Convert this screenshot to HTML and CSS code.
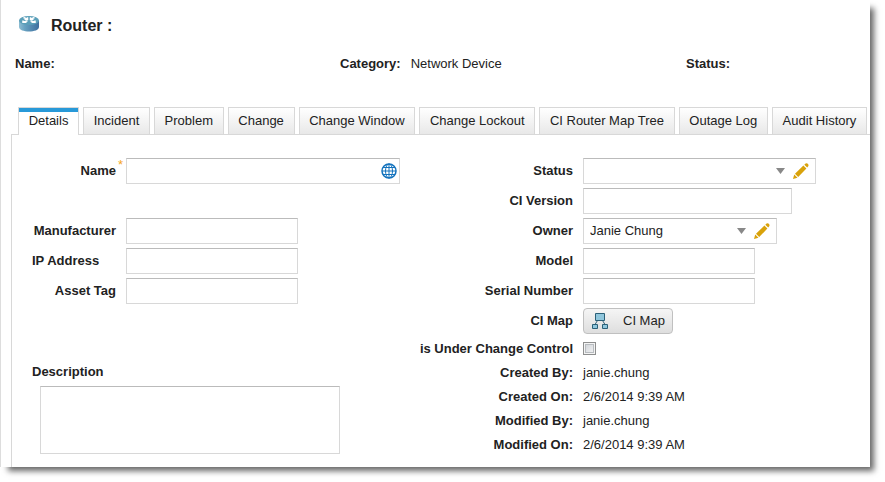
FILE: index.html
```html
<!DOCTYPE html>
<html lang="en">
<head>
    <meta charset="UTF-8">
    <meta name="viewport" content="width=device-width, initial-scale=1.0">
    <title>Router</title>
    <link rel="stylesheet" href="styles.css">
</head>
<body>
<svg class="sprite" aria-hidden="true">
    <symbol id="pencil" viewBox="0 0 16 16">
        <path fill="#d9a20b" d="M0 16l1.200-4.500 3.300 3.300zM2 10.800L10.400 2.600l3 3-8.200 8.400zM11.300 1.700L12.600.5q1.200-.6 2.200.3t.6 2.200l-1.200 1.600z"/>
    </symbol>
</svg>

<div class="window">
    <header class="title">
        <svg class="router-icon" viewBox="0 0 20 16" aria-hidden="true">
            <defs>
                <linearGradient id="side">
                    <stop offset="0" stop-color="#8dbdd2"/>
                    <stop offset=".3" stop-color="#66a0c0"/>
                    <stop offset="1" stop-color="#3e6f9f"/>
                </linearGradient>
            </defs>
            <path fill="url(#side)" d="M0 4.500V11c0 6 20 6 20 0V4.500z"/>
            <ellipse cx="10" cy="4.500" rx="10" ry="4.500" fill="#5b9fb9"/>
            <path fill="none" stroke="#fff" stroke-width="1.500" d="M4.500 1.500l4 1.700v-2M8.700 3.200H5.500M15.500 1.500l-4 1.700v-2M11.300 3.200h3.200M8.500 4.800L4 6.300M4 4.500v1.800h3.500M11.500 4.800L16 6.300M16 4.500v1.800h-3.500"/>
        </svg>
        <h1>Router :</h1>
    </header>

    <div class="summary">
        <div><b>Name:</b></div>
        <div><b>Category:</b><span>Network Device</span></div>
        <div><b>Status:</b></div>
    </div>

    <nav class="tabs">
        <button type="button" class="tab active">Details</button>
        <button type="button" class="tab">Incident</button>
        <button type="button" class="tab">Problem</button>
        <button type="button" class="tab">Change</button>
        <button type="button" class="tab">Change Window</button>
        <button type="button" class="tab">Change Lockout</button>
        <button type="button" class="tab">CI Router Map Tree</button>
        <button type="button" class="tab">Outage Log</button>
        <button type="button" class="tab">Audit History</button>
    </nav>

    <form class="panel">
        <div class="left">
            <div class="row name-row">
                <label for="name">Name</label>
                <span class="required">*</span>
                <div class="field wide">
                    <input type="text" id="name">
                    <svg class="icon" viewBox="0 0 16 16" aria-hidden="true">
                        <g fill="none" stroke="#1272bd">
                            <circle cx="8" cy="8" r="7" stroke-width="1.500"/>
                            <ellipse cx="8" cy="8" rx="3.500" ry="7"/>
                            <path d="M8 1v14M1 8h14M2 4.500h12M2 11.500h12"/>
                        </g>
                    </svg>
                </div>
            </div>
            <div class="row">
                <label for="manufacturer">Manufacturer</label>
                <input type="text" class="field" id="manufacturer">
            </div>
            <div class="row">
                <label for="ip" class="start">IP Address</label>
                <input type="text" class="field" id="ip">
            </div>
            <div class="row">
                <label for="asset">Asset Tag</label>
                <input type="text" class="field" id="asset">
            </div>
            <div class="description">
                <label for="description">Description</label>
                <textarea id="description"></textarea>
            </div>
        </div>

        <div class="right">
            <div class="row">
                <label for="status">Status</label>
                <div class="field status">
                    <select id="status"><option></option></select>
                    <svg class="arrow" viewBox="0 0 9 6" aria-hidden="true"><path d="M0 0h9L4.500 6z"/></svg>
                    <svg class="icon" aria-hidden="true"><use href="#pencil"/></svg>
                </div>
            </div>
            <div class="row">
                <label for="version">CI Version</label>
                <input type="text" class="field version" id="version">
            </div>
            <div class="row">
                <label for="owner">Owner</label>
                <div class="field owner">
                    <select id="owner"><option>Janie Chung</option></select>
                    <svg class="arrow" viewBox="0 0 9 6" aria-hidden="true"><path d="M0 0h9L4.500 6z"/></svg>
                    <svg class="icon" aria-hidden="true"><use href="#pencil"/></svg>
                </div>
            </div>
            <div class="row">
                <label for="model">Model</label>
                <input type="text" class="field" id="model">
            </div>
            <div class="row">
                <label for="serial">Serial Number</label>
                <input type="text" class="field" id="serial">
            </div>
            <div class="row">
                <label for="map">CI Map</label>
                <button type="button" class="map-button" id="map">
                    <svg class="icon" viewBox="0 0 16 16" aria-hidden="true">
                        <path fill="none" stroke="#35667c" d="M5.500 7.500L3 11.500M10.500 7.500l2.500 4"/>
                        <g fill="#8fc6dc" stroke="#2b6078">
                            <path d="M3.500.5h9v7h-9zM.5 11.500h5v4h-5zM10.500 11.500h5v4h-5z"/>
                        </g>
                    </svg>
                    CI Map
                </button>
            </div>
            <div class="row check-row">
                <label for="control">is Under Change Control</label>
                <input type="checkbox" id="control">
            </div>
            <div class="row info"><b>Created By:</b><span>janie.chung</span></div>
            <div class="row info"><b>Created On:</b><span>2/6/2014 9:39 AM</span></div>
            <div class="row info"><b>Modified By:</b><span>janie.chung</span></div>
            <div class="row info"><b>Modified On:</b><span>2/6/2014 9:39 AM</span></div>
        </div>
    </form>
</div>
</body>
</html>
```
FILE: styles.css
```css
* { box-sizing: border-box; }
body {
    margin: 0;
    padding: 0 15px 15px 0;
    background: #fff;
    color: #222;
    font: 13px/16px "Liberation Sans", Arial, sans-serif;
}
input, select, textarea, button { font: inherit; color: inherit; }
.sprite { display: none; }
.window {
    padding-top: 16px;
    border-left: 1px solid #ddd;
    background: #fff;
    box-shadow: 6px 6px 6px -2px rgba(0, 0, 0, .6);
}

.title { display: flex; align-items: center; height: 20px; padding-left: 18px; }
.router-icon { width: 20px; height: 16px; margin: 0 12px 4px 0; }
h1 { margin: 0; font-size: 16px; line-height: 20px; }

.summary {
    display: grid;
    grid-template-columns: 325px 346px 1fr;
    margin-top: 20px;
    padding-left: 14px;
}
.summary span { margin-left: 10px; }

.tabs { display: flex; gap: 4px; margin-top: 35px; padding: 0 3px 0 17px; }
.tab {
    flex: 1 1 auto;
    height: 27px;
    padding: 0 8px;
    border: 1px solid #d8d8d8;
    border-bottom: 0;
    background: linear-gradient(#fff, #e8e8e8);
    white-space: nowrap;
}
.tab.active {
    position: relative;
    height: 28px;
    margin-bottom: -1px;
    padding-bottom: 2px;
    background: linear-gradient(#2899d8 4px, #fff 4px);
}

.panel {
    display: grid;
    grid-template-columns: 388px 1fr;
    margin-left: 10px;
    padding: 23px 0 12px;
    border: solid #d8d8d8;
    border-width: 1px 0 0 1px;
}
.left, .right { display: flex; flex-direction: column; gap: 4px; }
.row { display: flex; align-items: center; gap: 10px; height: 26px; }
label, b { font-weight: bold; }
.row label, .row b { text-align: right; }
.left .row label { width: 104px; }
.left .row .start { padding-left: 20px; text-align: left; }
.right .row label, .right .row b { width: 173px; }
.name-row { position: relative; margin-bottom: 30px; }
.required { position: absolute; left: 106px; top: 0; line-height: 14px; color: #f5a623; }

.field {
    width: 172px;
    height: 26px;
    padding: 0 6px;
    border: 1px solid #d8d8d8;
    border-top-color: #bbb;
    background: #fff;
}
div.field { display: flex; align-items: center; }
.field input, .field select {
    flex: 1;
    min-width: 0;
    padding: 0;
    border: 0;
    background: none;
    appearance: none;
}
.wide { width: 274px; padding-right: 2px; }
.status { width: 233px; }
.version { width: 209px; }
.owner { width: 194px; }
.icon { width: 16px; height: 16px; }
.arrow { width: 9px; height: 6px; margin-right: 8px; fill: #888; }

.map-button {
    display: flex;
    align-items: center;
    gap: 15px;
    height: 26px;
    padding: 0 7px 0 8px;
    border: 1px solid #c0c0c0;
    border-radius: 4px;
    background: linear-gradient(#f5f5f5, #dedede);
}
.check-row { height: 21px; }
#control {
    width: 13px;
    height: 13px;
    margin: 0;
    border: 1px solid #8e8f8f;
    background: linear-gradient(135deg, #ccd0d5, #f6f6f6);
    box-shadow: inset 0 0 0 1px #f4f4f4, inset 0 0 0 2px #b8bcc0;
    appearance: none;
}
.info { height: 20px; }

.description { margin-top: 56px; padding: 0 60px 0 20px; }
.description label { display: block; }
textarea {
    display: block;
    width: 300px;
    height: 68px;
    margin: 6px 0 0 8px;
    border: 1px solid #d8d8d8;
    border-top-color: #bbb;
    resize: none;
}
```
